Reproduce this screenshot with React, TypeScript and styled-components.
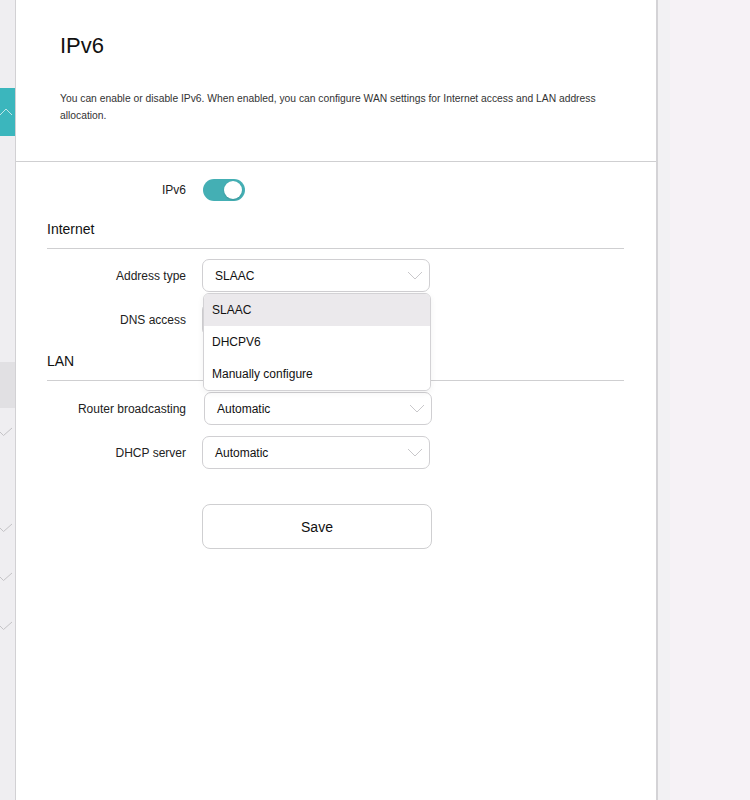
import styled, { createGlobalStyle } from "styled-components";

const GlobalStyle = createGlobalStyle`
  html, body {
    margin: 0;
    padding: 0;
    background: #f6f2f6;
    font-family: "Liberation Sans", Arial, sans-serif;
    color: #222;
  }
`;

const Page = styled.div`
  display: flex;
  height: 800px;
  overflow: hidden;
`;

// 왼쪽 메뉴 (잘려서 일부만 보임)
const Sidebar = styled.nav`
  width: 15px;
  flex-shrink: 0;
  background: #efeef1;
  border-right: 1px solid #d2d1d4;
  display: flex;
  flex-direction: column;
  overflow: hidden;
`;

const SideItem = styled.div<{ $h: number; $bg?: string }>`
  height: ${(p) => p.$h}px;
  flex-shrink: 0;
  background: ${(p) => p.$bg || "transparent"};
  display: flex;
  align-items: center;
  svg {
    margin-left: -1px;
  }
`;

const Panel = styled.main`
  width: 640px;
  flex-shrink: 0;
  background: #fff;
  border-right: 2px solid #d4d3d6;
`;

const RightSide = styled.div`
  flex: 1;
  background: #f6f2f6;
  border-left: 12px solid #f2f1f3;
`;

const Header = styled.header`
  padding: 32px 44px 37px;
  border-bottom: 1px solid #cfcfd1;
`;

const Title = styled.h1`
  margin: 0 0 30px;
  font-size: 22px;
  line-height: 28px;
  font-weight: 400;
  color: #111;
`;

const Desc = styled.p`
  margin: 0;
  font-size: 10.3px;
  line-height: 17px;
  color: #333;
`;

const Form = styled.section`
  padding: 17px 32px 0 31px;
  display: flex;
  flex-direction: column;
`;

const Row = styled.div<{ $mt?: number; $nudge?: number }>`
  display: grid;
  grid-template-columns: 139px 228px;
  column-gap: ${(p) => 16 + (p.$nudge || 0)}px;
  align-items: center;
  margin-top: ${(p) => p.$mt ?? 11}px;
  position: relative;
`;

const Label = styled.label`
  text-align: right;
  font-size: 12px;
  color: #222;
`;

const SectionTitle = styled.h2<{ $mt: number }>`
  margin: ${(p) => p.$mt}px 0 0;
  padding-bottom: 9px;
  border-bottom: 1px solid #cfcfd1;
  font-size: 14px;
  line-height: 20px;
  font-weight: 400;
  color: #111;
`;

const Toggle = styled.div<{ $on: boolean }>`
  width: 42px;
  height: 22px;
  margin-left: 1px;
  border-radius: 11px;
  background: ${(p) => (p.$on ? "#44afb4" : "#ccc")};
  display: flex;
  align-items: center;
  justify-content: ${(p) => (p.$on ? "flex-end" : "flex-start")};
  padding: 0 3px;
  box-sizing: border-box;
  &::after {
    content: "";
    width: 18px;
    height: 18px;
    border-radius: 50%;
    background: #fff;
    box-shadow: 0 1px 2px rgba(0, 0, 0, 0.15);
  }
`;

const SelectBox = styled.div`
  height: 33px;
  box-sizing: border-box;
  border: 1px solid #d0cfd2;
  border-radius: 7px;
  background: #fff;
  display: flex;
  align-items: center;
  justify-content: space-between;
  padding: 0 6px 0 12px;
  font-size: 12px;
  color: #111;
`;

const Menu = styled.ul`
  position: absolute;
  top: 34px;
  left: 156px;
  width: 226px;
  margin: 0;
  padding: 0;
  list-style: none;
  background: #fff;
  border: 1px solid #d3d2d5;
  border-radius: 6px;
  box-shadow: 0 2px 6px rgba(0, 0, 0, 0.06);
  overflow: hidden;
  z-index: 2;
`;

const MenuItem = styled.li<{ $active?: boolean }>`
  height: 32px;
  display: flex;
  align-items: center;
  padding-left: 8px;
  font-size: 12px;
  color: #111;
  background: ${(p) => (p.$active ? "#ebe9ec" : "#fff")};
`;

const SaveButton = styled.button`
  grid-column: 2;
  width: 230px;
  height: 45px;
  border: 1px solid #cfcfd1;
  border-radius: 8px;
  background: #fff;
  font-family: inherit;
  font-size: 14px;
  color: #111;
`;

const Chevron = () => (
  <svg width="16" height="9" viewBox="0 0 16 9" fill="none">
    <path d="M1 1 L8 8 L15 1" stroke="#c9c8cb" strokeWidth="1" />
  </svg>
);

const Check = () => (
  <svg width="14" height="10" viewBox="0 0 14 10" fill="none">
    <path d="M1 5 L4.5 8.5 L13 1" stroke="#c4c3c6" strokeWidth="1" />
  </svg>
);

const Select: React.FC<{ value: string }> = ({ value }) => (
  <SelectBox>
    <span>{value}</span>
    <Chevron />
  </SelectBox>
);

const addressTypes = ["SLAAC", "DHCPV6", "Manually configure"];

export default function App() {
  return (
    <>
      <GlobalStyle />
      <Page>
        <Sidebar>
          <SideItem $h={88} />
          <SideItem $h={48} $bg="#3bb6bd">
            <svg width="14" height="8" viewBox="0 0 14 8" fill="none">
              <path d="M1 7 L7 1 L13 7" stroke="#bfe6e8" strokeWidth="1" />
            </svg>
          </SideItem>
          <SideItem $h={226} />
          <SideItem $h={46} $bg="#e1e0e3" />
          <SideItem $h={48}>
            <Check />
          </SideItem>
          <SideItem $h={48} />
          <SideItem $h={48}>
            <Check />
          </SideItem>
          <SideItem $h={50}>
            <Check />
          </SideItem>
          <SideItem $h={48}>
            <Check />
          </SideItem>
        </Sidebar>

        <Panel>
          <Header>
            <Title>IPv6</Title>
            <Desc>
              You can enable or disable IPv6. When enabled, you can configure
              WAN settings for Internet access and LAN address allocation.
            </Desc>
          </Header>

          <Form>
            <Row $mt={0}>
              <Label>IPv6</Label>
              <Toggle $on={true} />
            </Row>

            <SectionTitle $mt={18}>Internet</SectionTitle>
            <Row $mt={10}>
              <Label>Address type</Label>
              <Select value="SLAAC" />
              {/* 열려있는 드롭다운 */}
              <Menu>
                {addressTypes.map((t, i) => (
                  <MenuItem key={t} $active={i === 0}>
                    {t}
                  </MenuItem>
                ))}
              </Menu>
            </Row>
            <Row>
              <Label>DNS access</Label>
              <Select value="Automatic" />
            </Row>

            <SectionTitle $mt={15}>LAN</SectionTitle>
            <Row $mt={11} $nudge={2}>
              <Label>Router broadcasting</Label>
              <Select value="Automatic" />
            </Row>
            <Row>
              <Label>DHCP server</Label>
              <Select value="Automatic" />
            </Row>

            <Row $mt={35}>
              <SaveButton>Save</SaveButton>
            </Row>
          </Form>
        </Panel>

        <RightSide />
      </Page>
    </>
  );
}
